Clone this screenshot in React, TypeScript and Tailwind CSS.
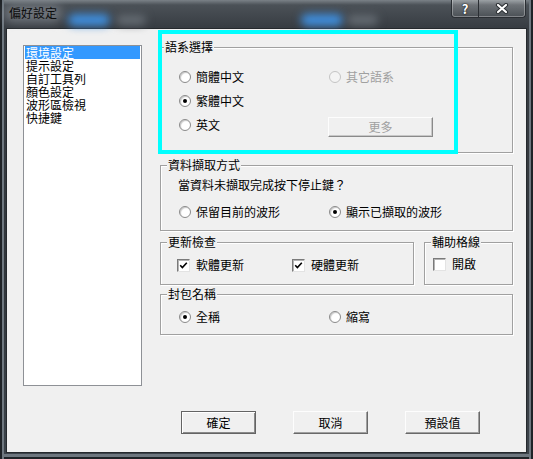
import React from "react";

const FONT = "font-['Noto_Sans_CJK_TC','Noto_Sans_CJK_SC',sans-serif]";

function Radio({ checked, disabled }: { checked?: boolean; disabled?: boolean }) {
  return (
    <span
      className={`flex h-[12px] w-[12px] shrink-0 items-center justify-center rounded-full border ${
        disabled
          ? "border-[#c4c4c4] bg-[#f4f4f4]"
          : "border-[#8a8a8a] bg-white shadow-[inset_1px_1px_1px_#c8c8c8]"
      }`}
    >
      {checked && <span className="h-[4px] w-[4px] rounded-full bg-black" />}
    </span>
  );
}

function Option({
  label,
  checked,
  disabled,
  className = "",
}: {
  label: string;
  checked?: boolean;
  disabled?: boolean;
  className?: string;
}) {
  return (
    <label className={`flex items-center gap-[5px] ${className}`}>
      <Radio checked={checked} disabled={disabled} />
      <span className={disabled ? "text-[#a0a0a0]" : "text-black"}>{label}</span>
    </label>
  );
}

function Check({ label, checked, className = "" }: { label: string; checked?: boolean; className?: string }) {
  return (
    <label className={`flex items-center gap-[6px] ${className}`}>
      <span className="flex h-[13px] w-[13px] shrink-0 items-center justify-center border border-t-[#7a7a7a] border-l-[#7a7a7a] border-r-[#e3e3e3] border-b-[#e3e3e3] bg-white shadow-[inset_1px_1px_0_#b4b4b4]">
        {checked && (
          <svg width="9" height="9" viewBox="0 0 9 9">
            <path d="M1.2 4.2 L3.4 6.6 L7.8 1.8" fill="none" stroke="#000" strokeWidth="1.6" />
          </svg>
        )}
      </span>
      <span>{label}</span>
    </label>
  );
}

function GroupBox({
  title,
  titleClass = "left-[6px]",
  className = "",
  children,
}: {
  title: string;
  titleClass?: string;
  className?: string;
  children?: React.ReactNode;
}) {
  return (
    <div className={`relative border border-[#a0a0a0] shadow-[inset_1px_1px_0_#fff,1px_1px_0_#fff] ${className}`}>
      <span className={`absolute -top-[8px] bg-[#f0f0f0] px-[1px] leading-[14px] ${titleClass}`}>{title}</span>
      {children}
    </div>
  );
}

function Btn({ children, primary }: { children: React.ReactNode; primary?: boolean }) {
  return (
    <button
      type="button"
      className={`flex h-[23px] w-[75px] items-center justify-center bg-[#f0f0f0] text-[12px] leading-none text-black ${
        primary
          ? "border border-[#646464] shadow-[inset_1px_1px_0_#fff,inset_-1px_-1px_0_#8a8a8a]"
          : "border border-t-[#fdfdfd] border-l-[#fdfdfd] border-r-[#696969] border-b-[#696969] shadow-[inset_-1px_-1px_0_#a0a0a0]"
      }`}
    >
      {children}
    </button>
  );
}

const items = ["環境設定", "提示設定", "自訂工具列", "顏色設定", "波形區檢視", "快捷鍵"];

export default function App() {
  return (
    <div
      className={`relative flex h-[459px] w-[533px] flex-col overflow-hidden bg-[linear-gradient(180deg,#7a8187_0px,#4b5157_5px,#383d43_27px,#30353a_60%,#3c434a_100%)] text-[12px] text-black shadow-[inset_2px_0_0_#1f2327,inset_4px_0_0_#6f7880,inset_-2px_0_0_#1f2327,inset_-4px_0_0_#6f7880,inset_0_-2px_0_#1f2327,inset_0_-5px_0_#6d767e] ${FONT}`}
    >
      {/* title bar */}
      <div className="relative flex h-[28px] items-start">
        <div className="pointer-events-none absolute left-[68px] top-[14px] h-[12px] w-[42px] rounded-full bg-[#3f8fdf] blur-[4px]" />
        <div className="pointer-events-none absolute left-[116px] top-[15px] h-[10px] w-[30px] rounded-full bg-[#656c73] blur-[4px]" />
        <div className="pointer-events-none absolute left-[301px] top-[14px] h-[12px] w-[42px] rounded-full bg-[#3f8fdf] blur-[4px]" />
        <div className="pointer-events-none absolute left-[347px] top-[15px] h-[10px] w-[31px] rounded-full bg-[#656c73] blur-[4px]" />
        <div className="pointer-events-none absolute left-[4px] top-[5px] h-[18px] w-[58px] rounded-full bg-[rgba(190,196,202,0.35)] blur-[5px]" />
        <span className="relative pl-[9px] pt-[6px] leading-[14px] text-[#0c0c0c]">偏好設定</span>
        <div className="relative ml-auto mr-[7px] flex h-[18px]">
          <div className="flex w-[28px] items-center justify-center rounded-bl-[4px] border border-t-0 border-[#2a2e33] bg-[linear-gradient(180deg,rgba(255,255,255,0.25),rgba(255,255,255,0.05))] shadow-[inset_1px_0_0_rgba(255,255,255,0.3),inset_0_-1px_0_rgba(255,255,255,0.3)]">
            <span className="text-[13px] font-bold leading-none text-white [text-shadow:0_0_2px_#222,0_0_1px_#000]">?</span>
          </div>
          <div className="flex w-[47px] items-center justify-center rounded-br-[4px] border border-l-0 border-t-0 border-[#2a2e33] bg-[linear-gradient(180deg,rgba(255,255,255,0.25),rgba(255,255,255,0.05))] shadow-[inset_-1px_0_0_rgba(255,255,255,0.3),inset_0_-1px_0_rgba(255,255,255,0.3)]">
            <svg width="14" height="11" viewBox="0 0 14 11">
              <path d="M3 2 L11 9 M11 2 L3 9" stroke="#2b2f33" strokeWidth="4.2" strokeLinecap="round" />
              <path d="M3 2 L11 9 M11 2 L3 9" stroke="#fff" strokeWidth="2.2" strokeLinecap="round" />
            </svg>
          </div>
        </div>
      </div>

      {/* client area */}
      <div className="mx-[6px] flex h-[425px] flex-col border border-[#25292d] bg-[#f0f0f0]">
        <div className="flex">
          <div className="ml-[16px] mt-[16px] flex h-[341px] w-[119px] flex-col border border-[#8e9196] bg-white px-[1px]">
            {items.map((it, i) => (
              <div
                key={it}
                className={`h-[13px] pl-[1px] leading-[13px] ${i === 0 ? "bg-[#3399ff] text-white" : "text-black"}`}
              >
                {it}
              </div>
            ))}
          </div>

          <div className="ml-[18px] mt-[18px] flex w-[353px] flex-col">
            <GroupBox title="語系選擇" titleClass="left-[3px]" className="h-[106px]">
              <div className="flex flex-col pl-[18px] pt-[17px]">
                <div className="flex h-[24px] items-center">
                  <Option label="簡體中文" className="w-[150px]" />
                  <Option label="其它語系" disabled />
                </div>
                <div className="flex h-[24px] items-center">
                  <Option label="繁體中文" checked className="w-[150px]" />
                </div>
                <div className="flex h-[24px] items-center">
                  <Option label="英文" className="w-[149px]" />
                  <div className="mt-[4px] flex h-[20px] w-[105px] items-center justify-center border border-t-[#fdfdfd] border-l-[#fdfdfd] border-r-[#8a8a8a] border-b-[#8a8a8a] bg-[#f0f0f0] text-[#a0a0a0] shadow-[inset_-1px_-1px_0_#c8c8c8]">
                    更多
                  </div>
                </div>
              </div>
            </GroupBox>

            <GroupBox title="資料擷取方式" className="mt-[12px] h-[66px]">
              <div className="flex flex-col pt-[10px]">
                <div className="flex h-[18px] items-center pl-[17px]">當資料未擷取完成按下停止鍵？</div>
                <div className="mt-[6px] flex h-[24px] items-center pl-[18px]">
                  <Option label="保留目前的波形" className="w-[150px]" />
                  <Option label="顯示已擷取的波形" checked />
                </div>
              </div>
            </GroupBox>

            <div className="mt-[11px] flex gap-[10px]">
              <GroupBox title="更新檢查" className="h-[43px] w-[254px]">
                <div className="mt-[12px] flex h-[20px] items-center pl-[16px]">
                  <Check label="軟體更新" checked className="w-[115px]" />
                  <Check label="硬體更新" checked />
                </div>
              </GroupBox>
              <GroupBox title="輔助格線" className="h-[43px] w-[89px]">
                <div className="mt-[11px] flex h-[20px] items-center pl-[8px]">
                  <Check label="開啟" />
                </div>
              </GroupBox>
            </div>

            <GroupBox title="封包名稱" className="mt-[9px] h-[41px]">
              <div className="mt-[10px] flex h-[24px] items-center pl-[18px]">
                <Option label="全稱" checked className="w-[150px]" />
                <Option label="縮寫" />
              </div>
            </GroupBox>
          </div>
        </div>

        <div className="mt-[25px] flex gap-[37px] pl-[174px]">
          <Btn primary>確定</Btn>
          <Btn>取消</Btn>
          <Btn>預設值</Btn>
        </div>
      </div>

      {/* highlight annotation */}
      <div className="pointer-events-none absolute left-[158px] top-[30px] h-[124px] w-[300px] border-[4px] border-[#00ffff]" />
    </div>
  );
}
